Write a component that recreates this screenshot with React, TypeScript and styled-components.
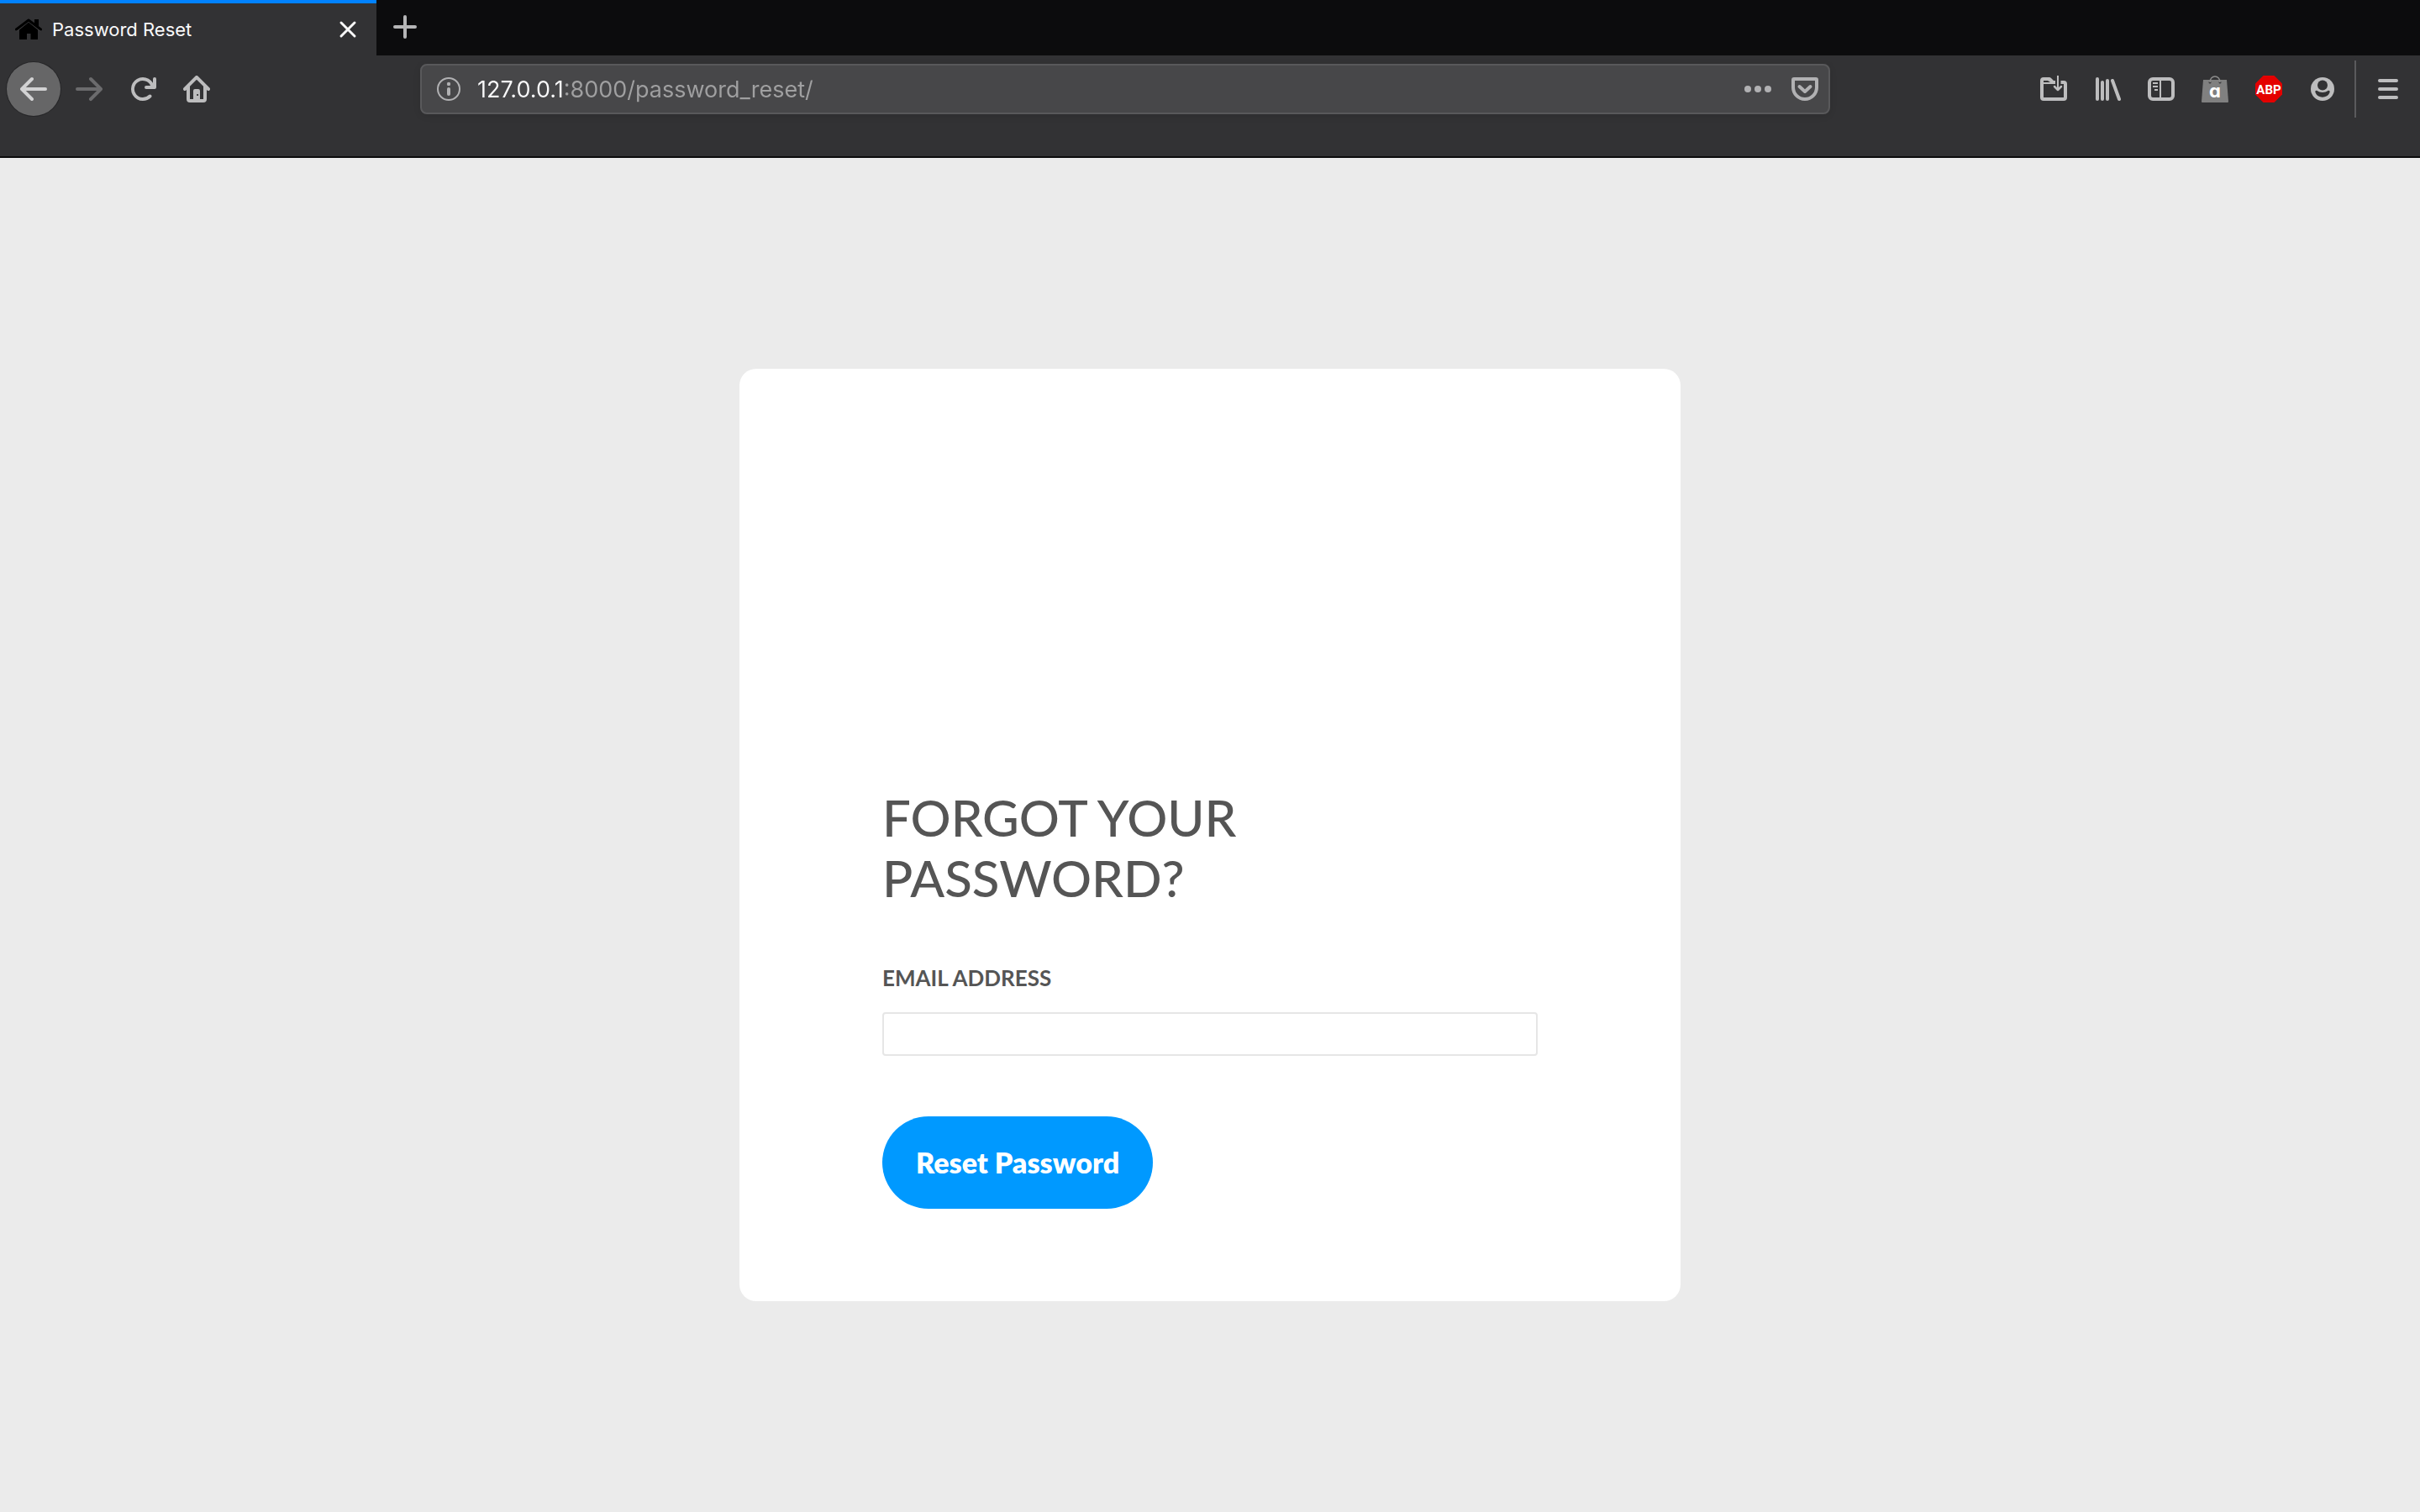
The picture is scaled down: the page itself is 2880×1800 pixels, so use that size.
import React from "react";
import styled, { createGlobalStyle } from "styled-components";

const GlobalStyle = createGlobalStyle`
  *, *::before, *::after {
    box-sizing: border-box;
  }

  body {
    margin: 0;
    background: #ebebeb;
  }
`;

const chromeFont = `Inter, Roboto, sans-serif`;
const pageFont = `Lato, "Open Sans", sans-serif`;

const Window = styled.div`
  min-height: 100vh;
  display: flex;
  flex-direction: column;
`;

/* ---------- Browser chrome ---------- */

const BrowserHeader = styled.header`
  background: #323234;
  border-bottom: 2px solid #0c0c0d;
  font-family: ${chromeFont};
`;

const TabStrip = styled.div`
  display: flex;
  height: 66px;
  background: #0c0c0d;
`;

const Tab = styled.div`
  display: flex;
  align-items: center;
  gap: 12px;
  width: 448px;
  padding: 0 18px;
  border-top: 4px solid #0082ff;
  background: #323234;
  color: #f9f9fa;
`;

const TabTitle = styled.span`
  flex: 1;
  font-size: 22px;
  line-height: 32px;
  white-space: nowrap;
`;

const IconButton = styled.button<{ $width?: number; $tone?: string }>`
  display: flex;
  flex: none;
  align-items: center;
  justify-content: center;
  width: ${({ $width = 64 }) => $width}px;
  height: 64px;
  padding: 0;
  border: 0;
  background: none;
  color: ${({ $tone = "#bdbdbe" }) => $tone};
`;

const BackButton = styled(IconButton)`
  margin-right: 2px;
  border-radius: 50%;
  background: #666667;
  box-shadow: 0 0 0 1px #262628;
`;

const Icon = styled.svg`
  display: block;
  flex: none;
  width: 32px;
  height: 32px;
`;

const Toolbar = styled.div`
  display: flex;
  align-items: center;
  height: 80px;
  padding: 0 6px 0 8px;
`;

const Spring = styled.div`
  flex: 0 1 234px;
`;

const AddressBar = styled.form`
  display: flex;
  flex: 1;
  align-items: center;
  min-width: 0;
  height: 60px;
  padding: 0 12px 0 16px;
  border: 2px solid #59595b;
  border-radius: 8px;
  background: #474749;
  box-shadow: 0 2px 8px rgba(0, 0, 0, 0.1);
`;

/* The host part of the address is brighter than the port and path. */
const AddressInput = styled.input`
  flex: 1;
  min-width: 0;
  margin: 0 18px;
  padding: 2px 0 0;
  border: 0;
  outline: 0;
  background: linear-gradient(to right, #f9f9fa 104px, #a0a0a1 104px);
  background-clip: text;
  color: #f9f9fa;
  -webkit-text-fill-color: transparent;
  font-family: ${chromeFont};
  font-size: 27px;
  line-height: 40px;
`;

const AddressActions = styled.div`
  display: flex;
  gap: 24px;
`;

const Separator = styled.div`
  width: 2px;
  height: 68px;
  margin: 0 6px;
  background: #5b5b5d;
`;

const BookmarksBar = styled.div`
  height: 40px;
`;

const BadgeText = styled.text`
  fill: #fff;
  font-family: Roboto, sans-serif;
  font-size: 15px;
  font-weight: 700;
  text-anchor: middle;
`;

const BagText = styled.text`
  fill: #fff;
  font-family: Inter, sans-serif;
  font-feature-settings: "cv11";
  font-size: 22px;
  font-weight: 700;
  text-anchor: middle;
`;

/* ---------- Page ---------- */

const Page = styled.main`
  display: grid;
  flex: 1;
  place-items: center;
  font-family: ${pageFont};
  color: #555;
`;

const Card = styled.section`
  width: min(1120px, 100%);
  padding: 498px 170px 110px;
  border-radius: 20px;
  background: #fff;
`;

const Title = styled.h1`
  margin: 0 0 66px;
  font-size: 60px;
  font-weight: 500;
  line-height: 72px;
`;

const ResetForm = styled.form`
  display: flex;
  flex-direction: column;
  align-items: flex-start;
`;

const Label = styled.label`
  margin-bottom: 24px;
  font-size: 26px;
  font-weight: 700;
  line-height: 34px;
`;

const EmailInput = styled.input`
  width: 100%;
  height: 52px;
  margin: 0 0 72px;
  padding: 0 12px;
  border: 2px solid #e6e6e6;
  border-radius: 4px;
  background: #fff;
  color: #555;
  font-family: ${pageFont};
  font-size: 26px;
`;

const SubmitButton = styled.button`
  height: 110px;
  padding: 0 40px;
  border: 0;
  border-radius: 55px;
  background: #09f;
  color: #fff;
  font-family: ${pageFont};
  font-size: 34px;
  font-weight: 800;
  line-height: 40px;
`;

/* ---------- Icons ---------- */

const HouseFavicon = () => (
  <Icon viewBox="0 0 32 32" aria-hidden="true">
    <path d="M5 28V16.500L16 7.500L27 16.500V28H18.500V21H14V28Z" fill="#000" />
    <path d="M23 4h5v10l-5-4z" fill="#000" />
    <path d="M1.500 18L16 6.500L30.500 18" fill="none" stroke="#48484a" strokeWidth="1.500" />
    <path d="M1.500 16L16 5L30.500 16" fill="none" stroke="#000" strokeWidth="3" strokeLinejoin="round" strokeLinecap="round" />
  </Icon>
);

const CloseIcon = () => (
  <Icon viewBox="0 0 32 32" aria-hidden="true">
    <path d="M8 8L24 24M24 8L8 24" stroke="currentColor" strokeWidth="3" strokeLinecap="round" />
  </Icon>
);

const PlusIcon = () => (
  <Icon viewBox="0 0 32 32" aria-hidden="true">
    <path d="M16 4V28M4 16H28" stroke="currentColor" strokeWidth="4" strokeLinecap="round" />
  </Icon>
);

const BackIcon = () => (
  <Icon viewBox="0 0 16 16" aria-hidden="true">
    <path
      fill="currentColor"
      d="M15 7H3.414l4.293-4.293a1 1 0 0 0-1.414-1.414l-6 6a1 1 0 0 0 0 1.414l6 6a1 1 0 0 0 1.414-1.414L3.414 9H15a1 1 0 0 0 0-2z"
    />
  </Icon>
);

const ForwardIcon = () => (
  <Icon viewBox="0 0 16 16" aria-hidden="true">
    <path
      fill="currentColor"
      d="M15.707 7.293l-6-6a1 1 0 0 0-1.414 1.414L12.586 7H1a1 1 0 0 0 0 2h11.586l-4.293 4.293a1 1 0 1 0 1.414 1.414l6-6a1 1 0 0 0 0-1.414z"
    />
  </Icon>
);

const ReloadIcon = () => (
  <Icon viewBox="0 0 16 16" aria-hidden="true">
    <path
      fill="currentColor"
      d="M15 1a1 1 0 0 0-1 1v2.418A6.995 6.995 0 1 0 8 15a6.954 6.954 0 0 0 4.950-2.050 1 1 0 0 0-1.414-1.414A5.019 5.019 0 1 1 12.549 6H10a1 1 0 0 0 0 2h5a1 1 0 0 0 1-1V2a1 1 0 0 0-1-1z"
    />
  </Icon>
);

const HomeIcon = () => (
  <Icon viewBox="0 0 16 16" aria-hidden="true">
    <path
      fill="currentColor"
      fillRule="evenodd"
      d="M15.707 7.293l-7-7a1 1 0 0 0-1.414 0l-7 7a1 1 0 0 0 1.414 1.414L2 8.414V14a2 2 0 0 0 2 2h8a2 2 0 0 0 2-2V8.414l.293.293a1 1 0 0 0 1.414-1.414zM4 14V6.414l4-4 4 4V14h-2V9a1 1 0 0 0-1-1H7a1 1 0 0 0-1 1v5zM8.500 11h.500v1h-.500a.500.500 0 0 1 0-1z"
    />
  </Icon>
);

const InfoIcon = () => (
  <Icon viewBox="0 0 32 32" aria-hidden="true">
    <circle cx="16" cy="16" r="13" fill="none" stroke="currentColor" strokeWidth="2" />
    <circle cx="16" cy="10" r="2.200" fill="currentColor" />
    <path d="M16 16V22" stroke="currentColor" strokeWidth="4" strokeLinecap="round" />
  </Icon>
);

const DotsIcon = () => (
  <Icon viewBox="0 0 32 32" aria-hidden="true" fill="currentColor">
    <circle cx="4" cy="16" r="4" />
    <circle cx="16" cy="16" r="4" />
    <circle cx="28" cy="16" r="4" />
  </Icon>
);

const PocketIcon = () => (
  <Icon viewBox="0 0 32 32" aria-hidden="true" fill="none" stroke="currentColor" strokeWidth="4">
    <path d="M2 5a1 1 0 0 1 1-1H29a1 1 0 0 1 1 1V14a14 14 0 0 1-28 0Z" />
    <path d="M9.500 13L16 19L22.500 13" strokeLinecap="round" strokeLinejoin="round" />
  </Icon>
);

const DownloadsFolderIcon = () => (
  <Icon viewBox="0 0 32 32" aria-hidden="true" fill="none" stroke="currentColor">
    <path d="M24.500 8H28a2 2 0 0 1 2 2V26a2 2 0 0 1-2 2H4a2 2 0 0 1-2-2V6a2 2 0 0 1 2-2H10" strokeWidth="4" />
    <path d="M2 9H18" strokeWidth="2" />
    <path d="M9 2H11C12.500 2 13 3 14 4L16 6H18V10H15L9 6Z" fill="currentColor" stroke="none" />
    <path d="M21 0V16" strokeWidth="2" />
    <path d="M17 13L21 17L25 13" strokeWidth="2.500" strokeLinecap="round" strokeLinejoin="round" />
  </Icon>
);

const LibraryIcon = () => (
  <Icon viewBox="0 0 32 32" aria-hidden="true">
    <path d="M4 4V28M10 8V28M16 6V28M22 6L30 28" stroke="currentColor" strokeWidth="4" strokeLinecap="round" />
  </Icon>
);

const SidebarIcon = () => (
  <Icon viewBox="0 0 32 32" aria-hidden="true" fill="none" stroke="currentColor" strokeWidth="2">
    <rect x="2" y="4" width="28" height="24" rx="4" strokeWidth="4" />
    <path d="M15 4V28M6 9H12M6 13H12M8 17H12" />
  </Icon>
);

const AssistantBagIcon = () => (
  <Icon viewBox="0 0 32 32" aria-hidden="true">
    <path d="M2 5H30L32 31Q32 32 31 32H1Q0 32 0 31Z" fill="#808080" />
    <circle cx="10" cy="8" r="1.500" fill="#3a3a3c" />
    <circle cx="22" cy="8" r="1.500" fill="#3a3a3c" />
    <path d="M10 8C10-1.500 22-1.500 22 8" fill="none" stroke="#8c8c8c" strokeWidth="1.500" />
    <BagText x="16" y="26">a</BagText>
  </Icon>
);

const BlockerIcon = () => (
  <Icon viewBox="0 0 32 32" aria-hidden="true">
    <path d="M9.500 0H22.500L32 9.500V22.500L22.500 32H9.500L0 22.500V9.500Z" fill="#e40000" />
    <BadgeText x="16" y="22">ABP</BadgeText>
  </Icon>
);

const AccountIcon = () => (
  <Icon viewBox="0 0 32 32" aria-hidden="true">
    <circle cx="16" cy="16" r="14" fill="currentColor" />
    <circle cx="16" cy="11.500" r="6" fill="#323234" />
    <path
      d="M9.500 18C8 17.300 6.800 18.500 7.500 20C10 27.500 22 27.500 24.500 20C25.200 18.500 24 17.300 22.500 18C19 20.500 13 20.500 9.500 18Z"
      fill="#323234"
    />
  </Icon>
);

const MenuIcon = () => (
  <Icon viewBox="0 0 32 32" aria-hidden="true">
    <path d="M6 6H26M6 16H26M6 26H26" stroke="currentColor" strokeWidth="4" strokeLinecap="round" />
  </Icon>
);

const toolbarActions = [
  { label: "Downloads", Glyph: DownloadsFolderIcon },
  { label: "Library", Glyph: LibraryIcon },
  { label: "Sidebars", Glyph: SidebarIcon },
  { label: "Shopping assistant", Glyph: AssistantBagIcon },
  { label: "Ad blocker", Glyph: BlockerIcon },
  { label: "Account", Glyph: AccountIcon },
];

const Browser = () => (
  <BrowserHeader>
    <TabStrip>
      <Tab>
        <HouseFavicon />
        <TabTitle>Password Reset</TabTitle>
        <IconButton type="button" aria-label="Close tab" $width={32} $tone="#f9f9fa">
          <CloseIcon />
        </IconButton>
      </Tab>
      <IconButton type="button" aria-label="New tab" $width={68} $tone="#b5b5b6">
        <PlusIcon />
      </IconButton>
    </TabStrip>
    <Toolbar>
      <BackButton type="button" aria-label="Back" $tone="#d2d2d3">
        <BackIcon />
      </BackButton>
      <IconButton type="button" aria-label="Forward" $tone="#6b6b6d">
        <ForwardIcon />
      </IconButton>
      <IconButton type="button" aria-label="Reload">
        <ReloadIcon />
      </IconButton>
      <IconButton type="button" aria-label="Home">
        <HomeIcon />
      </IconButton>
      <Spring />
      <AddressBar onSubmit={(event) => event.preventDefault()}>
        <IconButton type="button" aria-label="Site information" $width={32} $tone="#b1b1b3">
          <InfoIcon />
        </IconButton>
        <AddressInput type="text" aria-label="Address" defaultValue="127.0.0.1:8000/password_reset/" spellCheck={false} />
        <AddressActions>
          <IconButton type="button" aria-label="Page actions" $width={32} $tone="#b1b1b3">
            <DotsIcon />
          </IconButton>
          <IconButton type="button" aria-label="Save to Pocket" $width={32} $tone="#b1b1b3">
            <PocketIcon />
          </IconButton>
        </AddressActions>
      </AddressBar>
      <Spring />
      {toolbarActions.map(({ label, Glyph }) => (
        <IconButton key={label} type="button" aria-label={label}>
          <Glyph />
        </IconButton>
      ))}
      <Separator />
      <IconButton type="button" aria-label="Menu">
        <MenuIcon />
      </IconButton>
    </Toolbar>
    <BookmarksBar />
  </BrowserHeader>
);

export default function App() {
  return (
    <Window>
      <GlobalStyle />
      <Browser />
      <Page>
        <Card>
          <Title>FORGOT YOUR PASSWORD?</Title>
          <ResetForm onSubmit={(event) => event.preventDefault()}>
            <Label htmlFor="email">EMAIL ADDRESS</Label>
            <EmailInput id="email" name="email" type="email" />
            <SubmitButton type="submit">Reset Password</SubmitButton>
          </ResetForm>
        </Card>
      </Page>
    </Window>
  );
}
